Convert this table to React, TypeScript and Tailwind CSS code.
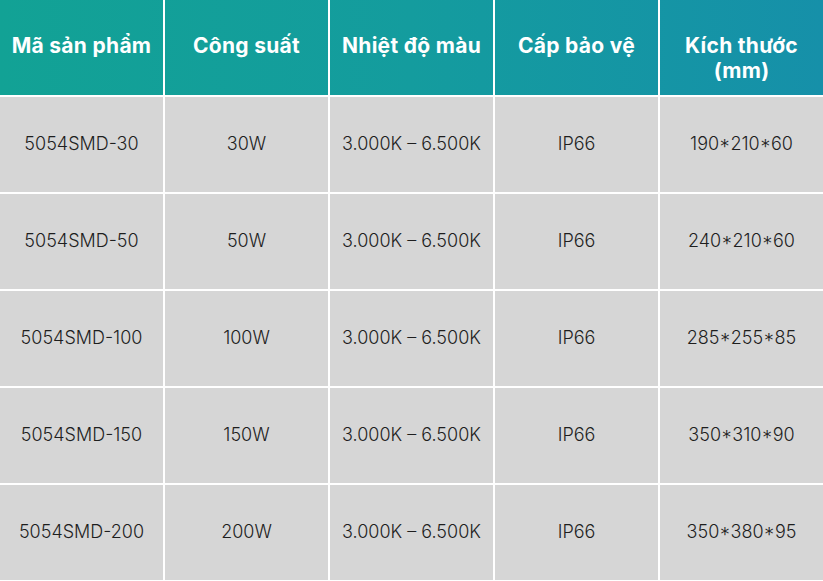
import React from "react";

const headers = [
  ["Mã sản phẩm"],
  ["Công suất"],
  ["Nhiệt độ màu"],
  ["Cấp bảo vệ"],
  ["Kích thước", "(mm)"],
];

const rows = [
  ["5054SMD-30", "30W", "3.000K – 6.500K", "IP66", "190*210*60"],
  ["5054SMD-50", "50W", "3.000K – 6.500K", "IP66", "240*210*60"],
  ["5054SMD-100", "100W", "3.000K – 6.500K", "IP66", "285*255*85"],
  ["5054SMD-150", "150W", "3.000K – 6.500K", "IP66", "350*310*90"],
  ["5054SMD-200", "200W", "3.000K – 6.500K", "IP66", "350*380*95"],
];

export default function App() {
  return (
    <div
      className="w-[823px] h-[581px] bg-white overflow-hidden"
      style={{ fontFamily: "Inter, 'Noto Sans', sans-serif" }}
    >
      <div className="grid grid-cols-5 gap-x-[2px]">
        {headers.map((h, i) => (
          <div
            key={i}
            className="h-[95px] flex flex-col items-center pt-[33px] text-white font-bold text-[21px] leading-[25px] tracking-[0.3px] bg-gradient-to-r from-[#12a295] via-[#149c9e] to-[#1690a9]"
            style={{ backgroundSize: "823px 95px", backgroundPosition: `${-i * 165}px 0` }}
          >
            {h.map((l, j) => (
              <span key={j}>{l}</span>
            ))}
          </div>
        ))}
      </div>
      <div className="flex flex-col gap-[2px] pt-[2px]">
        {rows.map((r, ri) => (
          <div key={ri} className="grid grid-cols-5 gap-x-[2px] h-[95px]">
            {r.map((c, ci) => (
              <div
                key={ci}
                className="bg-[#d6d6d6] flex items-center justify-center pb-[2px] text-[#1e1e1e] text-[18px] font-light"
              >
                {c}
              </div>
            ))}
          </div>
        ))}
      </div>
    </div>
  );
}
